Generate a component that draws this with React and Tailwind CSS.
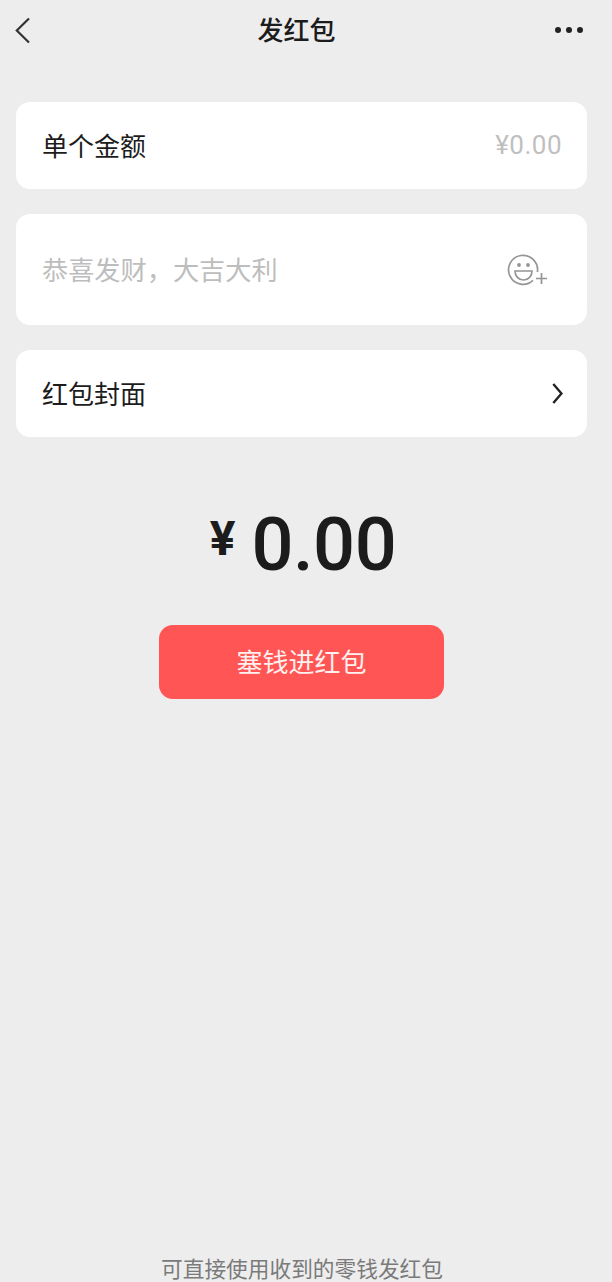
import React from "react";

const font = "font-['Roboto','Noto_Sans_CJK_SC',sans-serif]";

const Card = ({ className = "", children }) => (
  <div className={"flex items-center justify-between rounded-[14px] bg-white pl-[26px] " + className}>
    {children}
  </div>
);

const EmojiPlus = () => (
  <svg width="42" height="32" viewBox="0 0 42 32" fill="none" stroke="#949494" strokeWidth="1.7">
    <path d="M30.4 18A14.500 14.500 0 1 0 26 26.400" />
    <circle cx="12" cy="11" r="1.900" fill="#949494" stroke="none" />
    <circle cx="21" cy="11" r="1.900" fill="#949494" stroke="none" />
    <path d="M8 17h17c0 5-3.500 9-8.500 9S8 22 8 17Z" />
    <path d="M34.500 19v11M29 24.500h11" />
  </svg>
);

export default function App() {
  return (
    <div className={"flex h-[1282px] w-[612px] flex-col overflow-hidden bg-[#ededed] text-[#1c1c1c] " + font}>
      {/* barra superior */}
      <header className="flex h-[60px] items-center justify-between pl-[15px] pr-[29px]">
        <svg width="15" height="27" viewBox="0 0 15 27" fill="none" stroke="#333333" strokeWidth="2.200">
          <path d="M14 1.500 L1.800 13.500 L14 25.500" />
        </svg>
        <h1 className="ml-[8px] pt-[2px] text-[26px] font-medium leading-none">发红包</h1>
        <div className="flex gap-[5px]">
          <span className="h-[6px] w-[6px] rounded-full bg-[#222222]" />
          <span className="h-[6px] w-[6px] rounded-full bg-[#222222]" />
          <span className="h-[6px] w-[6px] rounded-full bg-[#222222]" />
        </div>
      </header>

      <div className="mt-[42px] flex flex-col gap-[25px] pl-[16px] pr-[25px]">
        <Card className="h-[87px] pr-[25px]">
          <span className="pt-[3px] text-[26px]">单个金额</span>
          <span className="text-[26px] tracking-[0.5px] text-[#bfbfbf]">¥0.00</span>
        </Card>
        <Card className="h-[111px] pr-[38px]">
          <span className="pt-[4px] text-[26.200px] text-[#bdbdbd]">恭喜发财，大吉大利</span>
          <EmojiPlus />
        </Card>
        <Card className="h-[87px] pr-[24px]">
          <span className="pt-[3px] text-[26px]">红包封面</span>
          <svg width="11" height="21" viewBox="0 0 11 21" fill="none" stroke="#222222" strokeWidth="2.400">
            <path d="M1.300 1 L9.500 10.500 L1.300 20" />
          </svg>
        </Card>
      </div>

      <div className="mt-[62px] flex items-start justify-center pr-[6px]">
        <span className="mt-[16px] mr-[16px] text-[48px] font-bold leading-none">¥</span>
        <span className="text-[74px] font-medium leading-[92px] tracking-[-0.5px]">0.00</span>
      </div>

      <button className="mt-[34px] ml-[159px] flex h-[74px] w-[285px] items-center justify-center rounded-[14px] bg-[#ff5555] pt-[3px] text-[26px] text-[#fff1ef]">
        塞钱进红包
      </button>

      <p className="mt-auto pr-[8px] text-center text-[21.700px] leading-[24px] text-[#7a7a7a]">
        可直接使用收到的零钱发红包
      </p>
    </div>
  );
}
